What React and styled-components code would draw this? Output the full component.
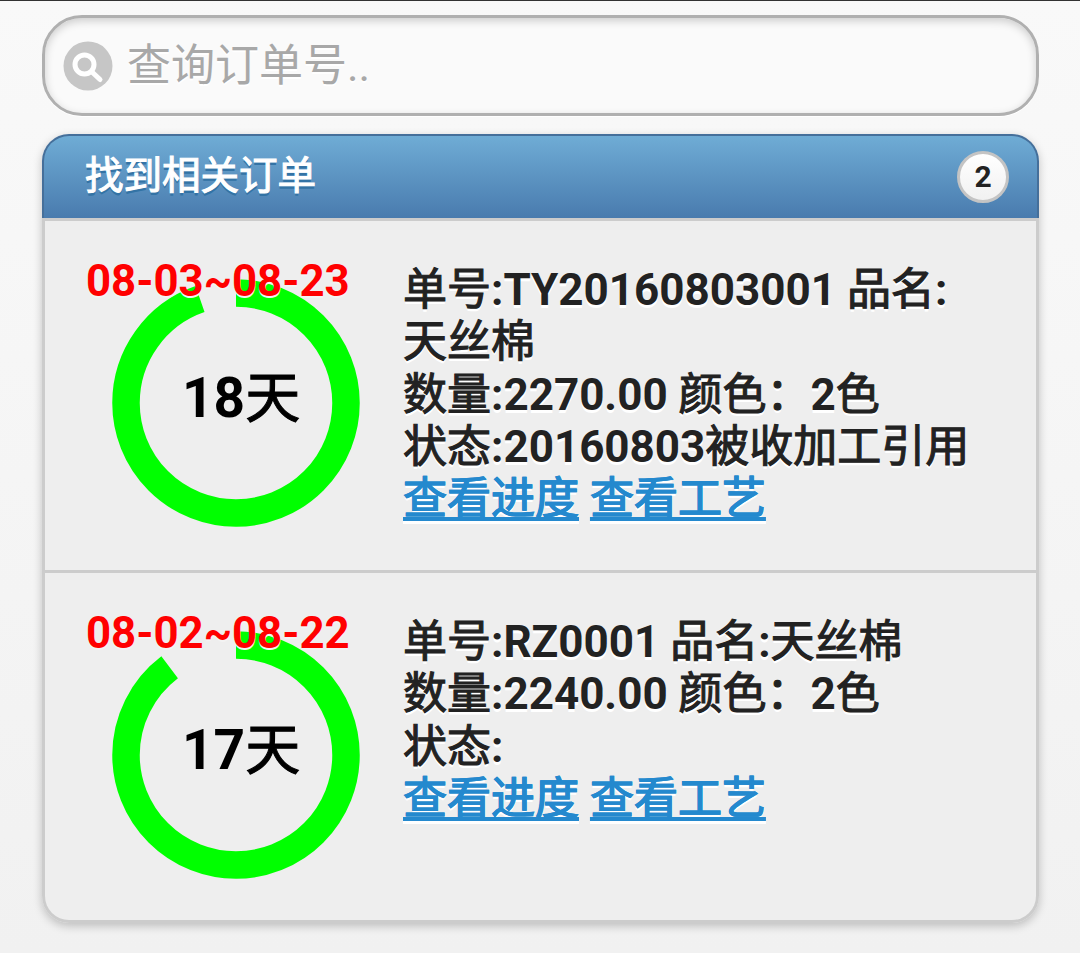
import React from 'react';
import styled, { createGlobalStyle } from 'styled-components';

const FONT = `Roboto, "Noto Sans CJK SC", sans-serif`;

const Global = createGlobalStyle`
  html, body { margin: 0; padding: 0; }
  body {
    background: linear-gradient(#f9f9f9, #f1f1f1);
    font-family: ${FONT};
    min-height: 953px;
  }
  * { box-sizing: border-box; }
`;

const Page = styled.div`
  border-top: 1px solid #333;
  padding: 14px 41px 0 42px;
  height: 953px;
  overflow: hidden;
`;

const SearchBar = styled.div`
  display: flex;
  align-items: center;
  height: 101px;
  padding-left: 18px;
  gap: 14px;
  background: #fafafa;
  border: 3px solid #b0b0b0;
  border-radius: 40px;
  box-shadow: inset 0 3px 8px rgba(0, 0, 0, 0.18), 0 1px 0 #fff;
`;

const SearchPlaceholder = styled.span`
  font-size: 44px;
  line-height: 52px;
  color: #a8a8a8;
  text-shadow: 0 2px 0 #fff;
`;

const ListCard = styled.div`
  margin-top: 18px;
  border-radius: 27px;
  box-shadow: 0 3px 10px rgba(0, 0, 0, 0.22);
`;

const ListHeader = styled.div`
  position: relative;
  height: 84px;
  padding: 14px 0 0 41px;
  background: linear-gradient(#6facd5, #497bae);
  border: 2px solid #456f9a;
  border-bottom: 0;
  border-radius: 27px 27px 0 0;
  color: #fff;
  font-size: 38.5px;
  font-weight: 700;
  line-height: 52px;
  text-shadow: 0 3px 0 #3373a5;
`;

const CountBubble = styled.span`
  position: absolute;
  top: 15px;
  right: 28px;
  width: 52px;
  height: 52px;
  display: flex;
  align-items: center;
  justify-content: center;
  background: linear-gradient(#fff, #f1f1f1);
  border: 3px solid #c4c4c4;
  border-radius: 50%;
  color: #222;
  font-size: 30px;
  font-weight: 700;
  text-shadow: none;
`;

const Row = styled.div`
  display: flex;
  padding: 40px 0 43px;
  background: #eee;
  border: 3px solid #ccc;
  border-top-width: ${(p) => (p.$first ? 3 : 0)}px;
  border-bottom-width: 3px;

  &:last-child {
    padding-bottom: 41px;
    border-radius: 0 0 27px 27px;
  }
`;

const Progress = styled.div`
  flex: none;
  width: 358px;
`;

const DateRange = styled.div`
  position: relative;
  z-index: 1;
  padding-left: 41px;
  color: #f00;
  font-size: 43.75px;
  font-weight: 700;
  line-height: 40px;
  text-shadow: 0 2px 0 #f3f3f3;
  white-space: nowrap;
`;

const RingWrap = styled.div`
  position: relative;
  width: 248px;
  height: 248px;
  margin: -22px 0 0 67px;
`;

const DaysLabel = styled.span`
  position: absolute;
  top: 87px;
  left: 70px;
  color: #000;
  font-size: 55px;
  font-weight: 700;
  line-height: 65px;
  white-space: nowrap;
`;

const Info = styled.div`
  width: 575px;
  padding-top: 3px;
  color: #222;
  font-size: 44px;
  font-weight: 700;
  line-height: 52.25px;
  text-shadow: 0 3px 0 #fff;
`;

const InfoLink = styled.a`
  color: #2489ce;
  text-decoration: underline;
`;

// the phone drew its Chinese fallback as a thickened regular, not a true bold
const Han = styled.span`
  font-weight: 400;
  -webkit-text-stroke: 1.1px currentColor;
`;

function Text({ children }) {
  return children.split(/([\u3000-\u9fff\uff00-\uffef]+)/).map((part, i) =>
    i % 2 ? <Han key={i}>{part}</Han> : part
  );
}

function Ring({ days, percent }) {
  const radius = 110;
  const length = 2 * Math.PI * radius;
  return (
    <RingWrap>
      <svg width="248" height="248" viewBox="0 0 248 248">
        <circle
          cx="124"
          cy="124"
          r={radius}
          fill="none"
          stroke="#0f0"
          strokeWidth="27.5"
          strokeDasharray={`${length * percent} ${length}`}
          transform="rotate(-90 124 124)"
        />
      </svg>
      <DaysLabel><Text>{`${days}天`}</Text></DaysLabel>
    </RingWrap>
  );
}

function SearchIcon() {
  return (
    <svg width="50" height="50" viewBox="0 0 50 50">
      <circle cx="25" cy="25" r="24.5" fill="#c6c6c6" />
      <circle cx="21.5" cy="23.5" r="9.5" fill="none" stroke="#fff" strokeWidth="5" />
      <path d="M29 31 L37 38.5" stroke="#fff" strokeWidth="5" strokeLinecap="round" />
    </svg>
  );
}

const orders = [
  {
    range: '08-03~08-23',
    days: 18,
    percent: 0.946,
    lines: ['单号:TY20160803001 品名:天丝棉', '数量:2270.00 颜色：2色', '状态:20160803被收加工引用'],
  },
  {
    range: '08-02~08-22',
    days: 17,
    percent: 0.896,
    lines: ['单号:RZ0001 品名:天丝棉', '数量:2240.00 颜色：2色', '状态:'],
  },
];

export default function App() {
  return (
    <>
      <Global />
      <Page>
        <SearchBar>
          <SearchIcon />
          <SearchPlaceholder>查询订单号..</SearchPlaceholder>
        </SearchBar>
        <ListCard>
          <ListHeader>
            <Text>找到相关订单</Text>
            <CountBubble>{orders.length}</CountBubble>
          </ListHeader>
          {orders.map((order, i) => (
            <Row key={order.range} $first={i === 0}>
              <Progress>
                <DateRange>{order.range}</DateRange>
                <Ring days={order.days} percent={order.percent} />
              </Progress>
              <Info>
                {order.lines.map((line) => (
                  <div key={line}><Text>{line}</Text></div>
                ))}
                <InfoLink href="#"><Text>查看进度</Text></InfoLink> <InfoLink href="#"><Text>查看工艺</Text></InfoLink>
              </Info>
            </Row>
          ))}
        </ListCard>
      </Page>
    </>
  );
}
